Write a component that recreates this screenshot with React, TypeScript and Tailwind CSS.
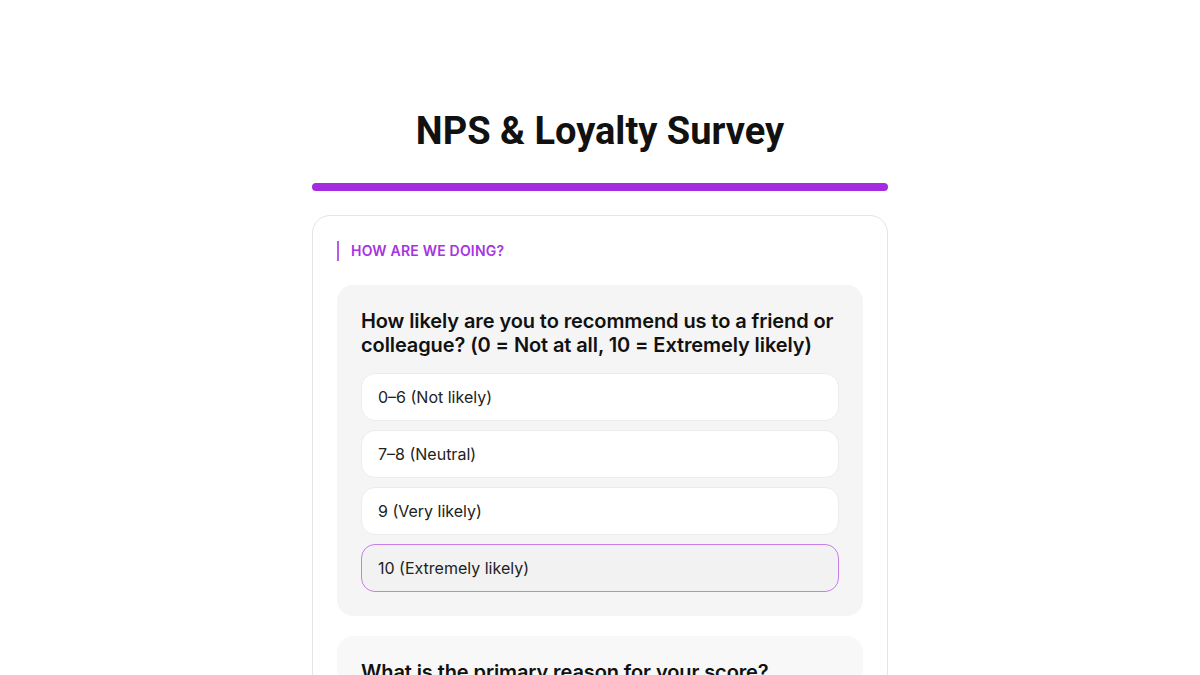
import React, { useState } from 'react';

const options = ['0–6 (Not likely)', '7–8 (Neutral)', '9 (Very likely)', '10 (Extremely likely)'];

export default function App() {
  const [selected, setSelected] = useState(3);

  return (
    <div className="min-h-screen bg-white font-['Inter','Noto_Sans',sans-serif] text-[#111]">
      <div className="mx-auto w-[576px] pt-[111px]">
        <h1 className="mb-8 text-center font-['Roboto',sans-serif] text-[38px] font-bold leading-10 text-[#111]">
          NPS &amp; Loyalty Survey
        </h1>
        <div className="mb-6 h-2 w-full rounded-full bg-[#a42be0]" />

        <div className="rounded-[18px] border border-[#e5e5e5] bg-white p-6">
          <div className="mb-6 mt-px border-l-2 border-[#b55ce6] pl-3 text-[14px] font-semibold uppercase leading-5 tracking-[0.2px] text-[#a535e0]">
            How are we doing?
          </div>

          <div className="rounded-2xl bg-[#f5f5f5] p-6">
            <p className="mb-4 text-[20px] font-semibold leading-6 tracking-[-0.1px]">
              How likely are you to recommend us to a friend or colleague? (0 = Not at all, 10 = Extremely likely)
            </p>
            <div className="flex flex-col gap-[9px]">
              {options.map((o, i) => (
                <button
                  key={o}
                  onClick={() => setSelected(i)}
                  className={
                    i === selected
                      ? 'flex h-12 items-center rounded-[14px] border border-[#c77dea] bg-[#f2f2f2] px-4 text-left text-[16px] text-[#222]'
                      : 'flex h-12 items-center rounded-[14px] border border-[#ececec] bg-white px-4 text-left text-[16px] text-[#222]'
                  }
                >
                  {o}
                </button>
              ))}
            </div>
          </div>

          <div className="mt-5 rounded-2xl bg-[#f7f8f7] p-6">
            <p className="mb-4 text-[20px] font-semibold leading-6 tracking-[-0.1px]">
              What is the primary reason for your score?
            </p>
            <textarea
              className="h-28 w-full rounded-[14px] border border-[#ececec] bg-white p-4 text-[16px]"
              placeholder="Tell us more..."
            />
          </div>
        </div>
      </div>
    </div>
  );
}
